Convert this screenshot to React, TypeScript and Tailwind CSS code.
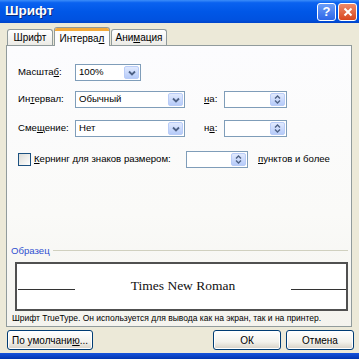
import React from "react";

function Chevron() {
  return (
    <svg width="8" height="6" viewBox="0 0 8 6">
      <path d="M1 1.5 L4 4.5 L7 1.5" stroke="#4D6185" strokeWidth="1.8" fill="none" />
    </svg>
  );
}

function DropBtn() {
  return (
    <div className="m-[1px] flex w-[15px] items-center justify-center rounded-[2px] border border-[#B9CCF7] bg-[linear-gradient(to_bottom,#E1EAFE,#B6CBF9)]">
      <Chevron />
    </div>
  );
}

function SpinBtn() {
  return (
    <div className="m-[1px] flex w-[15px] flex-col items-center justify-center gap-[1px] rounded-[2px] border border-[#B9CCF7] bg-[linear-gradient(to_bottom,#E1EAFE,#B6CBF9)]">
      <svg width="7" height="4" viewBox="0 0 7 4">
        <path d="M1 3.5 L3.5 1 L6 3.5" stroke="#4D6185" strokeWidth="1.4" fill="none" />
      </svg>
      <svg width="7" height="4" viewBox="0 0 7 4">
        <path d="M1 0.5 L3.5 3 L6 0.5" stroke="#4D6185" strokeWidth="1.4" fill="none" />
      </svg>
    </div>
  );
}

function U({ children }: { children: React.ReactNode }) {
  return <span className="underline underline-offset-[1px]">{children}</span>;
}

function XPButton({ children, className }: { children: React.ReactNode; className: string }) {
  return (
    <div
      className={
        "flex h-[20px] items-center justify-center rounded-[3px] border border-[#003C74] bg-[linear-gradient(to_bottom,#FFFFFF,#F3F2EC_60%,#D6D0C5)] text-[10px] text-black shadow-[inset_0_0_0_1px_#FFFFFF] " +
        className
      }
    >
      {children}
    </div>
  );
}

export default function App() {
  return (
    <div className="flex h-[359px] w-[359px] flex-col overflow-hidden bg-[#ECE9D8] font-['Liberation_Sans',Arial,sans-serif] text-[9.6px] text-black">
      {/* Title bar */}
      <div className="flex h-[23px] shrink-0 items-center bg-[linear-gradient(to_bottom,#3C8DF9_0%,#0A62F0_12%,#0057E7_50%,#0052E0_85%,#0043C9_100%)] pl-[5px] pr-[2px]">
        <span className="text-[13.5px] font-bold text-white [text-shadow:1px_1px_0_#0A2A7A]">Шрифт</span>
        <div className="ml-auto flex gap-[2px]">
          <div className="flex h-[18px] w-[19px] items-center justify-center rounded-[3px] border border-white bg-[linear-gradient(to_bottom,#6A9DF8,#2D66E8)] text-[13px] font-bold leading-none text-white">
            ?
          </div>
          <div className="flex h-[18px] w-[19px] items-center justify-center rounded-[3px] border border-white bg-[linear-gradient(to_bottom,#EE8A6A,#D8461E)]">
            <svg width="10" height="10" viewBox="0 0 10 10">
              <path d="M1.5 1.5 L8.5 8.5 M8.5 1.5 L1.5 8.5" stroke="white" strokeWidth="2" />
            </svg>
          </div>
        </div>
      </div>

      {/* Tabs */}
      <div className="mt-[4px] flex h-[18px] items-end pl-[7px] text-[10px]">
        <div className="flex h-[16px] w-[46px] items-center justify-center rounded-t-[3px] border border-b-0 border-[#919B9C] bg-[linear-gradient(to_bottom,#FFFFFF,#ECEBE6)]">
          Шрифт
        </div>
        <div className="relative z-10 -mb-[1px] ml-[1px] flex h-[19px] w-[56px] flex-col rounded-t-[3px] border border-b-0 border-[#919B9C] bg-[#FCFCFE]">
          <div className="h-[3px] rounded-t-[2px] bg-[#F3A93A]" />
          <div className="flex flex-1 items-center justify-center">
            Интерва<U>л</U>
          </div>
        </div>
        <div className="ml-[1px] flex h-[16px] w-[56px] items-center justify-center rounded-t-[3px] border border-b-0 border-[#919B9C] bg-[linear-gradient(to_bottom,#FFFFFF,#ECEBE6)]">
          Ани<U>м</U>ация
        </div>
      </div>

      {/* Panel */}
      <div className="ml-[6px] flex h-[282px] w-[346px] flex-col border border-[#919B9C] bg-[linear-gradient(to_bottom,#FCFCFE_0%,#FAFAF8_60%,#F4F3EE_100%)] pl-[11px] pr-[3px]">
        <div className="mt-[18px] flex h-[17px] items-center">
          <div className="w-[57px]">
            Масшта<U>б</U>:
          </div>
          <div className="flex h-[17px] w-[66px] border border-[#7F9DB9] bg-white">
            <span className="flex flex-1 items-center pl-[3px]">100%</span>
            <DropBtn />
          </div>
        </div>

        <div className="mt-[10px] flex h-[17px] items-center">
          <div className="w-[57px]">
            Ин<U>т</U>ервал:
          </div>
          <div className="flex h-[17px] w-[110px] border border-[#7F9DB9] bg-white">
            <span className="flex flex-1 items-center pl-[3px]">Обычный</span>
            <DropBtn />
          </div>
          <div className="ml-[19px] w-[20px]">
            <U>н</U>а:
          </div>
          <div className="flex h-[17px] w-[63px] border border-[#7F9DB9] bg-white">
            <span className="flex-1" />
            <SpinBtn />
          </div>
        </div>

        <div className="mt-[12px] flex h-[17px] items-center">
          <div className="w-[57px]">
            Сме<U>щ</U>ение:
          </div>
          <div className="flex h-[17px] w-[110px] border border-[#7F9DB9] bg-white">
            <span className="flex flex-1 items-center pl-[3px]">Нет</span>
            <DropBtn />
          </div>
          <div className="ml-[19px] w-[20px]">
            н<U>а</U>:
          </div>
          <div className="flex h-[17px] w-[63px] border border-[#7F9DB9] bg-white">
            <span className="flex-1" />
            <SpinBtn />
          </div>
        </div>

        <div className="mt-[14px] flex h-[17px] items-center">
          <div className="h-[13px] w-[13px] border border-[#1C5180] bg-[linear-gradient(135deg,#DCDCD7,#FFFFFF)]" />
          <div className="ml-[3px] w-[152px]">
            <U>К</U>ернинг для знаков размером:
          </div>
          <div className="flex h-[17px] w-[62px] border border-[#7F9DB9] bg-white">
            <span className="flex-1" />
            <SpinBtn />
          </div>
          <div className="ml-[10px]">
            <U>п</U>унктов и более
          </div>
        </div>

        <div className="flex-1" />

        {/* Sample */}
        <div className="-ml-[7px] flex items-center">
          <span className="text-[#2E4FD0]">Образец</span>
          <div className="ml-[3px] h-[1px] flex-1 bg-[#D0D0BF]" />
        </div>
        <div className="-ml-[3px] mt-[4px] flex h-[49px] w-[333px] items-center border-2 border-[#505050] bg-white">
          <div className="ml-[1px] mt-[6px] h-[1px] w-[57px] bg-[#333]" />
          <div className="flex flex-1 justify-center font-['Liberation_Serif','Times_New_Roman',serif] text-[13.5px] text-[#111]">
            Times New Roman
          </div>
          <div className="mt-[6px] h-[1px] w-[55px] bg-[#333]" />
        </div>
        <div className="-ml-[6px] mb-[3px] mt-[2px] text-[8.5px] leading-[10px] text-black">
          Шрифт TrueType. Он используется для вывода как на экран, так и на принтер.
        </div>
      </div>

      {/* Buttons */}
      <div className="mt-[3px] flex pl-[7px]">
        <XPButton className="w-[86px]">
          По умолчани<U>ю</U>...
        </XPButton>
        <XPButton className="ml-[120px] w-[68px]">ОК</XPButton>
        <XPButton className="ml-[5px] w-[68px]">Отмена</XPButton>
      </div>

      <div className="flex-1" />
      <div className="h-[6px] bg-[linear-gradient(to_bottom,#1653DC,#0035B0)]" />
    </div>
  );
}
